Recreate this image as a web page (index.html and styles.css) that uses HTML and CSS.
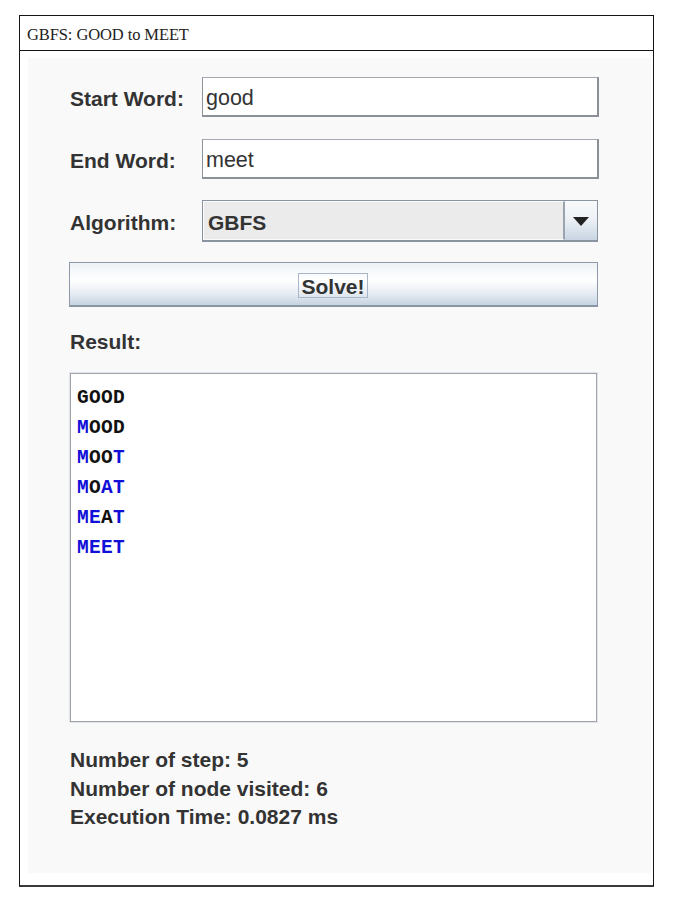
FILE: index.html
```html
<!DOCTYPE html>
<html>
<head>
<meta charset="utf-8">
<title>GBFS: GOOD to MEET</title>
<link rel="stylesheet" href="styles.css">
</head>
<body>
<div class="frame">
  <div class="titlebar">GBFS: GOOD to MEET</div>
  <div class="panel">
    <div class="content">
      <div class="form">
        <div class="label">Start Word:</div>
        <div class="field">good</div>
        <div class="label">End Word:</div>
        <div class="field">meet</div>
        <div class="label">Algorithm:</div>
        <div class="combo">
          <div class="combo-value">GBFS</div>
          <div class="combo-arrow"><span class="tri"></span></div>
        </div>
      </div>
      <div class="solve"><span class="solve-focus">Solve!</span></div>
      <div class="result-label">Result:</div>
      <div class="result-box">
        <div class="result">
          <div class="line">GOOD</div>
          <div class="line"><span class="hl">M</span>OOD</div>
          <div class="line"><span class="hl">M</span>OO<span class="hl">T</span></div>
          <div class="line"><span class="hl">M</span>O<span class="hl">AT</span></div>
          <div class="line"><span class="hl">ME</span>A<span class="hl">T</span></div>
          <div class="line"><span class="hl">MEET</span></div>
        </div>
      </div>
      <div class="stats">
        <div>Number of step: 5</div>
        <div>Number of node visited: 6</div>
        <div>Execution Time: 0.0827 ms</div>
      </div>
    </div>
  </div>
</div>
</body>
</html>
```
FILE: styles.css
```css
html, body {
  margin: 0;
  padding: 0;
  background: #ffffff;
}

.frame {
  margin: 15px 0 0 19px;
  width: 633px;
  height: 869px;
  border: 1px solid #141414;
  border-bottom: 2px solid #3a3a3a;
  display: flex;
  flex-direction: column;
  box-sizing: content-box;
}

.titlebar {
  height: 34px;
  border-bottom: 1px solid #141414;
  font-family: "Liberation Serif", "Times New Roman", serif;
  font-size: 16.5px;
  color: #222;
  line-height: 38px;
  padding-left: 7px;
  letter-spacing: -0.1px;
}

.panel {
  flex: 1;
  display: flex;
  padding: 7px 2px 12px 8px;
}

.content {
  flex: 1;
  background: #f9f9f9;
  padding: 19px 52px 0 41px;
  display: flex;
  flex-direction: column;
  font-family: "Liberation Sans", Arial, sans-serif;
  color: #333;
}

.form {
  display: grid;
  grid-template-columns: 133px 1fr;
  grid-template-rows: 40px 40px 42px;
  row-gap: 21.5px;
  align-items: center;
}

.label {
  font-weight: bold;
  font-size: 21px;
  padding-top: 4px;
  padding-left: 1px;
  color: #333;
}

.field {
  height: 100%;
  box-sizing: border-box;
  background: #fff;
  border-top: 1px solid #a3a8b0;
  border-left: 1px solid #8d929a;
  border-right: 2px solid #8b9098;
  border-bottom: 2px solid #8b9098;
  font-size: 21.5px;
  padding-left: 3px;
  line-height: 41px;
  color: #333;
}

.combo {
  height: 100%;
  box-sizing: border-box;
  display: flex;
  border: 1px solid #8a93a0;
  border-bottom: 2px solid #8a93a0;
  width: 396px;
}

.combo-value {
  flex: 1;
  background: #ebebeb;
  border: 1px solid #fafafa;
  border-right: 2px solid #9aa3ae;
  font-weight: bold;
  font-size: 21px;
  line-height: 41px;
  padding-left: 4px;
  color: #333;
}

.combo-arrow {
  width: 32px;
  background: linear-gradient(#f7f9fb 0%, #eef2f6 45%, #c9d5e3 100%);
  display: flex;
  align-items: center;
  justify-content: center;
}

.tri {
  width: 0;
  height: 0;
  border-left: 8px solid transparent;
  border-right: 8px solid transparent;
  border-top: 9px solid #222;
  margin-top: 2px;
}

.solve {
  margin-top: 20px;
  height: 45px;
  width: 529px;
  box-sizing: border-box;
  border: 1px solid #8e99a8;
  border-bottom: 2px solid #8a95a4;
  background: linear-gradient(#eef2f6 0%, #ffffff 40%, #e9eef4 70%, #c6d3e2 100%);
  display: flex;
  align-items: center;
  justify-content: center;
}

.solve-focus {
  border: 1px solid #a9b6c7;
  padding: 0 2px;
  height: 23px;
  line-height: 25px;
  font-weight: bold;
  font-size: 21px;
  color: #333;
  margin-top: 2px;
  margin-left: -1px;
}

.result-label {
  margin-top: 23px;
  font-weight: bold;
  font-size: 21px;
  line-height: 24px;
  padding-left: 1px;
}

.result-box {
  margin-top: 18px;
  width: 529px;
  height: 351px;
  box-sizing: border-box;
  border: 1px solid #e1e5ea;
}

.result {
  height: 100%;
  box-sizing: border-box;
  background: #fff;
  border: 1px solid #a0a4aa;
  padding: 9px 0 0 6px;
}

.line {
  font-family: "Liberation Mono", "Courier New", monospace;
  font-weight: bold;
  font-size: 19.5px;
  line-height: 30px;
  color: #111;
  letter-spacing: 0.3px;
}

.hl {
  color: #1010d8;
}

.stats {
  margin-top: 23px;
  font-weight: bold;
  font-size: 21px;
  line-height: 28.5px;
  padding-left: 1px;
}
```
